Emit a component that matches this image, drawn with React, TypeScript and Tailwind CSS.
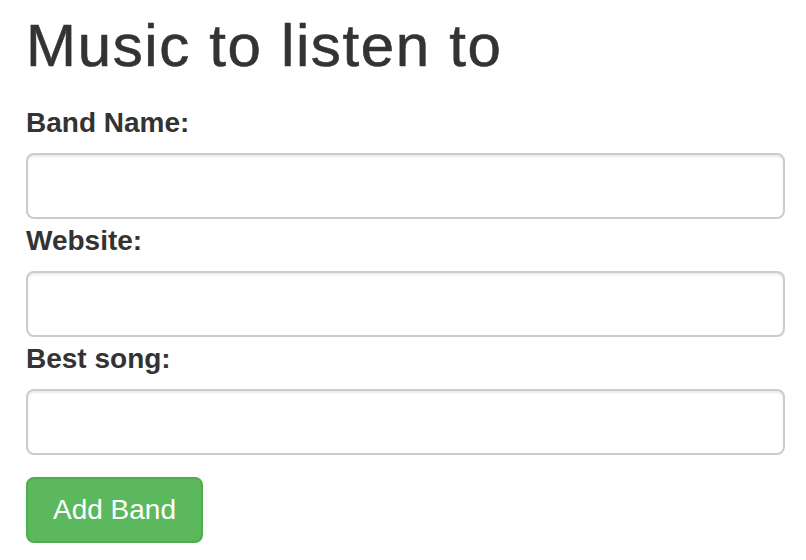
export default function App() {
  const fields = ["Band Name:", "Website:", "Best song:"];
  return (
    <div
      className="w-[806px] h-[560px] bg-white text-[#333333] pl-[26px] pr-[21px] pt-[13px]"
      style={{ fontFamily: '"Liberation Sans", Arial, Helvetica, sans-serif' }}
    >
      <h1 className="text-[60px] leading-[66px] tracking-[1.65px] font-normal m-0 [-webkit-text-stroke:0.6px_#333333]">
        Music to listen to
      </h1>
      <div className="mt-[24px] flex flex-col">
        {fields.map((f, i) => (
          <div key={f} className={i > 0 ? "mt-[2px]" : ""}>
            <label className="block text-[28px] leading-[40px] font-bold mb-[10px]">{f}</label>
            <input
              type="text"
              className="block w-full h-[66px] border-2 border-[#cccccc] rounded-[8px] bg-white shadow-[inset_0_2px_2px_rgba(0,0,0,0.075)] outline-none px-[24px] text-[28px]"
            />
          </div>
        ))}
      </div>
      <button
        type="button"
        className="mt-[22px] h-[66px] w-[177px] bg-[#5cb85c] border-2 border-[#4cae4c] rounded-[8px] text-white text-[28px] leading-[40px] font-normal flex items-center justify-center"
      >
        Add Band
      </button>
    </div>
  );
}
